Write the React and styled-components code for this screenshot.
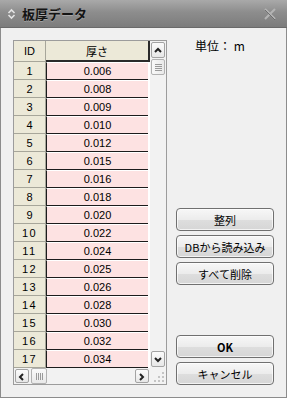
import styled, { createGlobalStyle } from 'styled-components';

const GlobalStyle = createGlobalStyle`
  html, body {
    margin: 0;
    padding: 0;
    background: #f0f0f0;
  }
  * {
    box-sizing: border-box;
  }
`;

const thicknesses = [
  '0.006', '0.008', '0.009', '0.010', '0.012', '0.015', '0.016', '0.018', '0.020',
  '0.022', '0.024', '0.025', '0.026', '0.028', '0.030', '0.032', '0.034',
];

const Window = styled.div`
  display: flex;
  flex-direction: column;
  width: 287px;
  height: 398px;
  background: #f0f0f0;
  border: 1px solid #8c8c8c;
  border-top: none;
  font-family: "Liberation Sans", "Noto Sans CJK JP", sans-serif;
  font-size: 11px;
  color: #000;
`;

const TitleBar = styled.div`
  display: flex;
  align-items: center;
  height: 28px;
  margin: 0 -1px;
  padding: 0 10px 0 7px;
  background: linear-gradient(#a9a9a9, #8d8d8d 45%, #7c7c7c);
  border-bottom: 1px solid #6a6a6a;

  h1 {
    flex: 1;
    margin: 0 0 0 6px;
    font-family: "Noto Sans CJK JP", sans-serif;
    font-size: 13px;
    font-weight: 700;
    color: #141414;
    text-shadow: 0 1px 0 rgba(255, 255, 255, 0.25);
  }
`;

const Body = styled.div`
  display: flex;
  padding: 12px 0 0 12px;
`;

const Frame = styled.div`
  display: grid;
  grid-template-columns: 136px 16px;
  grid-template-rows: 327px 16px;
  width: 154px;
  border: 1px solid #9c9c9c;
  background: #f4f4f4;
`;

const Sheet = styled.div`
  overflow: hidden;
  background: #fff;
`;

const Row = styled.div`
  display: grid;
  grid-template-columns: 32px 104px;
  height: ${(p) => (p.$head ? 21 : 18)}px;
`;

const IdCell = styled.div`
  display: flex;
  align-items: center;
  justify-content: center;
  background: #ece9d8;
  border-right: 1px solid #a7a69a;
  border-bottom: 1px solid #a7a69a;
  letter-spacing: ${(p) => (p.$spaced ? '1.5px' : '0')};
`;

const HeadCell = styled.div`
  display: flex;
  align-items: center;
  justify-content: center;
  background: #ece9d8;
  border-right: 2px solid #2a2a2a;
  border-bottom: 2px solid #2a2a2a;
  font-family: "Noto Sans CJK JP", sans-serif;
  font-size: 11px;
`;

const ValueCell = styled.div`
  display: flex;
  align-items: center;
  justify-content: center;
  margin-right: 2px;
  background: #fde2e2;
  border-left: 1px solid #1c1c1c;
  border-bottom: 1px solid #1c1c1c;
  border-top: 1px solid #fff;
`;

const VScroll = styled.div`
  display: flex;
  flex-direction: column;
  background: #f2f2f2;
`;

const HScroll = styled.div`
  display: flex;
  background: #f2f2f2;
`;

const ArrowButton = styled.div`
  display: flex;
  flex: 0 0 ${(p) => p.$size}px;
  align-items: center;
  justify-content: center;
  margin: 1px;
  border: 1px solid #a3a3a3;
  border-radius: 2px;
  background: linear-gradient(#fbfbfb, #e7e7e7);
`;

const Thumb = styled.div`
  display: flex;
  flex: 0 0 ${(p) => p.$size}px;
  flex-direction: ${(p) => (p.$horizontal ? 'row' : 'column')};
  align-items: center;
  justify-content: center;
  gap: 1px;
  margin: 0 1px;
  border: 1px solid #b2b2b2;
  border-radius: 2px;
  background: linear-gradient(${(p) => (p.$horizontal ? '#f9f9f9, #e9e9e9' : '90deg, #f9f9f9, #e9e9e9')});

  span {
    display: block;
    background: #9a9a9a;
    width: ${(p) => (p.$horizontal ? '1px' : '7px')};
    height: ${(p) => (p.$horizontal ? '7px' : '1px')};
  }
`;

const Track = styled.div`
  flex: 1;
`;

const Corner = styled.div`
  display: flex;
  align-items: flex-end;
  justify-content: flex-end;
  padding: 0 2px 2px 0;
  background: #f2f2f2;
`;

const Side = styled.div`
  display: flex;
  flex-direction: column;
  width: 98px;
  margin-left: 9px;
`;

const Unit = styled.div`
  padding-left: 19px;
  font-family: "Noto Sans CJK JP", sans-serif;
  font-size: 12px;
  line-height: 12px;
`;

const ButtonGroup = styled.div`
  display: flex;
  flex-direction: column;
  gap: 4px;
  margin-top: ${(p) => p.$top || 'auto'};
`;

const Button = styled.button`
  height: 23px;
  padding: 0;
  border: 1px solid #707070;
  border-radius: 4px;
  background: linear-gradient(#f7f7f7, #ececec 50%, #dedede 51%, #d6d6d6);
  box-shadow: inset 0 0 0 1px rgba(255, 255, 255, 0.7);
  font-family: "Noto Sans CJK JP", sans-serif;
  font-size: 11px;
  font-weight: ${(p) => (p.$bold ? 700 : 400)};
  color: #000;
`;

const Chevron = ({ dir }) => {
  const points = {
    up: '2,6 5,3 8,6',
    down: '2,3 5,6 8,3',
    left: '6,2 3,5 6,8',
    right: '3,2 6,5 3,8',
  }[dir];
  return (
    <svg width="10" height="9" viewBox="0 0 10 9">
      <polyline points={points} fill="none" stroke="#222" strokeWidth="2" />
    </svg>
  );
};

const Grip = () => (
  <svg width="10" height="10" viewBox="0 0 10 10">
    {[[8, 0], [8, 4], [4, 4], [8, 8], [4, 8], [0, 8]].map(([x, y]) => (
      <rect key={`${x}-${y}`} x={x} y={y} width="2" height="2" fill="#c4c4c4" />
    ))}
  </svg>
);

export default function App() {
  return (
    <>
      <GlobalStyle />
      <Window>
        <TitleBar>
          <svg width="9" height="12" viewBox="0 0 9 12">
            <polyline points="1.5,5 4.5,2 7.5,5" fill="none" stroke="#e4e4e4" strokeWidth="1.6" />
            <polyline points="1.5,7 4.5,10 7.5,7" fill="none" stroke="#e4e4e4" strokeWidth="1.6" />
          </svg>
          <h1>板厚データ</h1>
          <svg width="14" height="12" viewBox="0 0 14 12">
            <path d="M2 1 L12 11 M12 1 L2 11" stroke="#b4b4b4" strokeWidth="2" />
            <path d="M2 2 L12 12" stroke="#6e6e6e" strokeWidth="1" />
          </svg>
        </TitleBar>
        <Body>
          <Frame>
            <Sheet>
              <Row $head>
                <IdCell>ID</IdCell>
                <HeadCell>厚さ</HeadCell>
              </Row>
              {thicknesses.map((value, i) => (
                <Row key={value}>
                  <IdCell $spaced={i + 1 >= 10}>{i + 1}</IdCell>
                  <ValueCell>{value}</ValueCell>
                </Row>
              ))}
            </Sheet>
            <VScroll>
              <ArrowButton $size={16}><Chevron dir="up" /></ArrowButton>
              <Thumb $size={16}>
                <span />
                <span />
                <span />
                <span />
              </Thumb>
              <Track />
              <ArrowButton $size={16}><Chevron dir="down" /></ArrowButton>
            </VScroll>
            <HScroll>
              <ArrowButton $size={14}><Chevron dir="left" /></ArrowButton>
              <Thumb $size={16} $horizontal>
                <span />
                <span />
                <span />
                <span />
              </Thumb>
              <Track />
              <ArrowButton $size={14}><Chevron dir="right" /></ArrowButton>
            </HScroll>
            <Corner><Grip /></Corner>
          </Frame>
          <Side>
            <Unit>単位： m</Unit>
            <ButtonGroup $top="156px">
              <Button type="button">整列</Button>
              <Button type="button">DBから読み込み</Button>
              <Button type="button">すべて削除</Button>
            </ButtonGroup>
            <ButtonGroup>
              <Button type="button" $bold>OK</Button>
              <Button type="button">キャンセル</Button>
            </ButtonGroup>
          </Side>
        </Body>
      </Window>
    </>
  );
}
